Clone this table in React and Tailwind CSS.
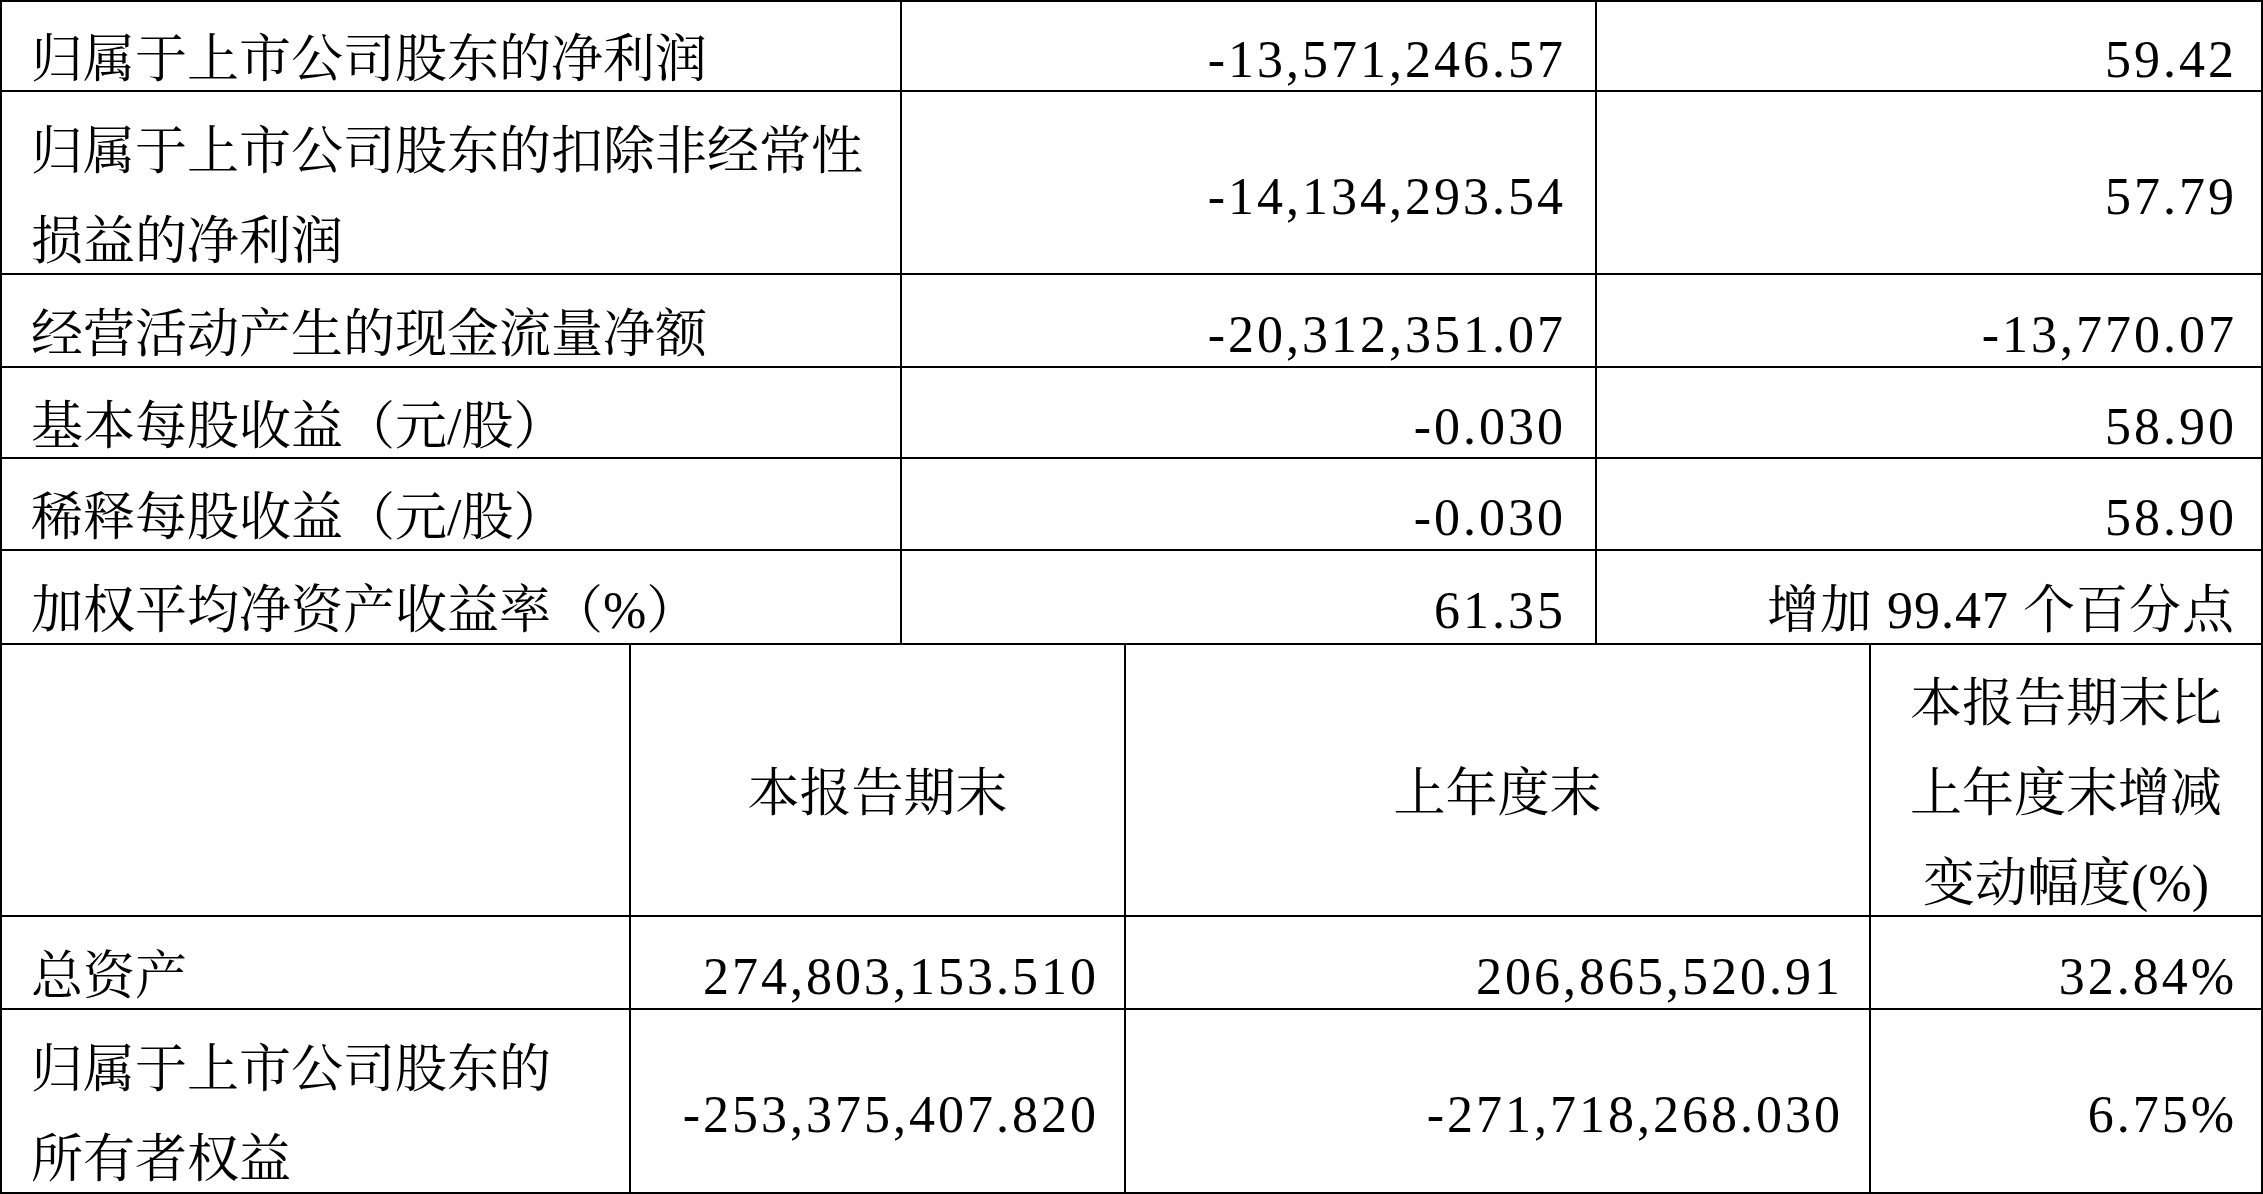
const TOP_ROWS = [
  { label: ['归属于上市公司股东的净利润'], current: '-13,571,246.57', change: '59.42' },
  { label: ['归属于上市公司股东的扣除非经常性', '损益的净利润'], current: '-14,134,293.54', change: '57.79' },
  { label: ['经营活动产生的现金流量净额'], current: '-20,312,351.07', change: '-13,770.07' },
  { label: ['基本每股收益（元/股）'], current: '-0.030', change: '58.90' },
  { label: ['稀释每股收益（元/股）'], current: '-0.030', change: '58.90' },
  { label: ['加权平均净资产收益率（%）'], current: '61.35', change: '增加 99.47 个百分点', tight: true },
];

const BOTTOM_ROWS = [
  { label: ['总资产'], current: '274,803,153.510', last: '206,865,520.91', change: '32.84%' },
  { label: ['归属于上市公司股东的', '所有者权益'], current: '-253,375,407.820', last: '-271,718,268.030', change: '6.75%' },
];

const cell = 'flex items-center border-r-2 border-b-2 border-black pt-[28px] leading-[90px]';
const num = 'justify-end whitespace-nowrap tracking-[3px]';

function Lines({ lines }) {
  return (
    <div>
      {lines.map((l) => (
        <div key={l} className="whitespace-nowrap">{l}</div>
      ))}
    </div>
  );
}

export default function App() {
  return (
    <div className="w-[2263px] h-[1194px] bg-white text-black text-[52px] font-['Liberation_Serif','Noto_Serif_CJK_SC','Noto_Sans_CJK_SC',serif] overflow-hidden">
      <div className="border-l-2 border-t-2 border-black">
        {/* upper table */}
        <div className="grid grid-cols-[900px_695px_1fr] grid-rows-[90px_183px_93px_91px_92px_94px]">
          {TOP_ROWS.map((r) => (
            <div key={r.label[0]} className="contents">
              <div className={`${cell} pl-[29px]`}>
                <Lines lines={r.label} />
              </div>
              <div className={`${cell} ${num} pr-[29px]`}>{r.current}</div>
              <div className={`${cell} justify-end whitespace-nowrap ${r.tight ? 'tracking-[1px] pr-[26px]' : 'tracking-[3px] pr-[24px]'}`}>
                {r.change}
              </div>
            </div>
          ))}
        </div>

        {/* lower table */}
        <div className="grid grid-cols-[629px_495px_745px_1fr] grid-rows-[272px_93px_184px]">
          <div className={cell}></div>
          <div className={`${cell} justify-center`}>本报告期末</div>
          <div className={`${cell} justify-center`}>上年度末</div>
          <div className={`${cell} justify-center text-center`}>
            <Lines lines={['本报告期末比', '上年度末增减', '变动幅度(%)']} />
          </div>
          {BOTTOM_ROWS.map((r) => (
            <div key={r.label[0]} className="contents">
              <div className={`${cell} pl-[29px]`}>
                <Lines lines={r.label} />
              </div>
              <div className={`${cell} ${num} pr-[25px]`}>{r.current}</div>
              <div className={`${cell} ${num} pr-[26px]`}>{r.last}</div>
              <div className={`${cell} ${num} pr-[24px]`}>{r.change}</div>
            </div>
          ))}
        </div>
      </div>
    </div>
  );
}
